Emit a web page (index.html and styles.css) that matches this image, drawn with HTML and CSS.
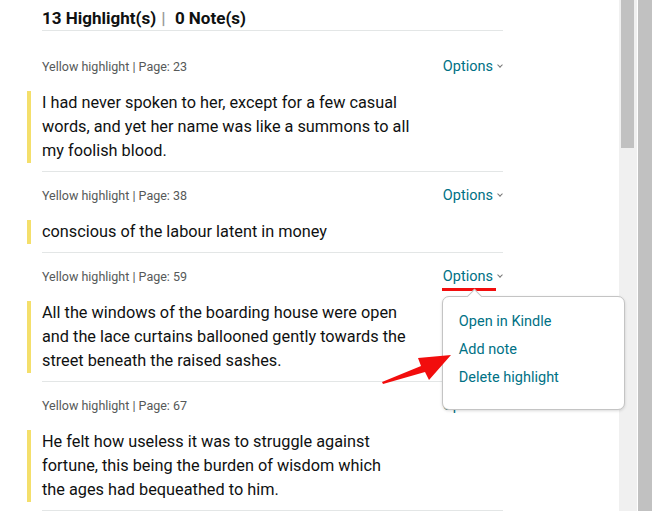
FILE: index.html
```html
<!DOCTYPE html>
<html>
  <head>
    <meta charset="utf-8" />
    <title>Notebook</title>
    <link rel="stylesheet" href="styles.css">
  </head>
  <body>
    <div class="page">
      <div class="panel">
        <div class="summary">
          <span>13 Highlight(s)</span>
          <span class="sep">|</span>
          <span>0 Note(s)</span>
        </div>

        <div class="entry">
          <div class="entryHead">
            <span class="meta">Yellow highlight | Page: 23</span>
            <span class="options">Options <span class="chev"></span></span>
          </div>
          <p class="quote">I had never spoken to her, except for a few casual words, and yet her name was like a summons to all my foolish blood.</p>
        </div>

        <div class="entry">
          <div class="entryHead">
            <span class="meta">Yellow highlight | Page: 38</span>
            <span class="options">Options <span class="chev"></span></span>
          </div>
          <p class="quote">conscious of the labour latent in money</p>
        </div>

        <div class="entry">
          <div class="entryHead">
            <span class="meta">Yellow highlight | Page: 59</span>
            <span class="options open">
              <span class="marked">Options</span> <span class="chev"></span>
              <div class="dropdown">
                <a class="menuItem">Open in Kindle</a>
                <a class="menuItem">Add note</a>
                <a class="menuItem">Delete highlight</a>
              </div>
            </span>
          </div>
          <p class="quote">All the windows of the boarding house were open and the lace curtains ballooned gently towards the street beneath the raised sashes.</p>
        </div>

        <div class="entry">
          <div class="entryHead">
            <span class="meta">Yellow highlight | Page: 67</span>
            <span class="options">Options <span class="chev"></span></span>
          </div>
          <p class="quote">He felt how useless it was to struggle against fortune, this being the burden of wisdom which<br>the ages had bequeathed to him.</p>
        </div>

        <!-- annotation arrow pointing at "Add note" -->
        <svg class="pointer" width="80" height="40" viewBox="0 0 80 40">
          <polygon points="1,29 40,13 37,5 70,2 48,27 44,19 2,31" fill="#f20d0d" />
        </svg>
      </div>

      <div class="track"><div class="thumb"></div></div>
      <div class="outerBar"></div>
    </div>
  </body>
</html>
```

FILE: styles.css
```css
html, body {
  margin: 0;
  padding: 0;
  background: #ffffff;
}
body {
  font-family: Roboto, "Noto Sans", sans-serif;
  color: #0f1111;
}
div.page {
  display: flex;
  height: 511px;
  overflow: hidden;
}
div.panel {
  position: relative;
  width: 461px;
  padding: 0 116px 0 42px;
  flex: none;
}
div.summary {
  font-size: 17px;
  font-weight: bold;
  line-height: 20px;
  padding-top: 8px;
  padding-bottom: 2px;
  border-bottom: 1px solid #e3e6e6;
  margin-bottom: 12px;
}
div.summary .sep {
  color: #9a9a9a;
  margin: 0 5px 0 1px;
}
div.entry {
  padding-top: 13px;
  border-bottom: 1px solid #e3e6e6;
}
div.entryHead {
  display: flex;
  justify-content: space-between;
  align-items: center;
  height: 20px;
}
span.meta {
  font-size: 12.5px;
  color: #565959;
}
span.options {
  position: relative;
  font-size: 14.5px;
  color: #007185;
  display: flex;
  align-items: center;
  gap: 1px;
  height: 20px;
}
span.chev {
  display: inline-block;
  width: 3px;
  height: 3px;
  border-right: 1px solid #777;
  border-bottom: 1px solid #777;
  transform: rotate(45deg);
  margin: 0 1px 3px 4px;
}
span.marked {
  position: relative;
}
span.marked::after {
  content: "";
  position: absolute;
  left: -1px;
  right: -3px;
  bottom: -6px;
  height: 3px;
  background: #f20d0d;
}
p.quote {
  width: 372px;
  margin: 15px 0 8px -15px;
  padding-left: 11px;
  border-left: 4px solid #f4df6b;
  font-size: 16.3px;
  line-height: 24px;
}
div.dropdown {
  position: absolute;
  top: 30px;
  left: -1px;
  width: 181px;
  height: 83px;
  padding: 11px 0 18px 0;
  background: #ffffff;
  border: 1px solid #c4c4c4;
  border-radius: 7px;
  box-shadow: 0 1px 3px rgba(0, 0, 0, 0.15);
  z-index: 2;
}
div.dropdown::before {
  content: "";
  position: absolute;
  top: -6px;
  left: 26px;
  width: 10px;
  height: 10px;
  background: #ffffff;
  border-left: 1px solid #c4c4c4;
  border-top: 1px solid #c4c4c4;
  transform: rotate(45deg);
}
a.menuItem {
  display: block;
  padding-left: 16px;
  line-height: 28px;
  font-size: 14.5px;
  color: #007185;
}
svg.pointer {
  position: absolute;
  left: 381px;
  top: 353px;
  z-index: 3;
}
div.track {
  width: 18px;
  background: #f0f0f0;
  flex: none;
}
div.thumb {
  width: 13px;
  height: 148px;
  margin-left: 2px;
  background: #c1c1c1;
}
div.outerBar {
  width: 14px;
  margin-left: 1px;
  background: #c1c1c1;
  flex: none;
}
```
